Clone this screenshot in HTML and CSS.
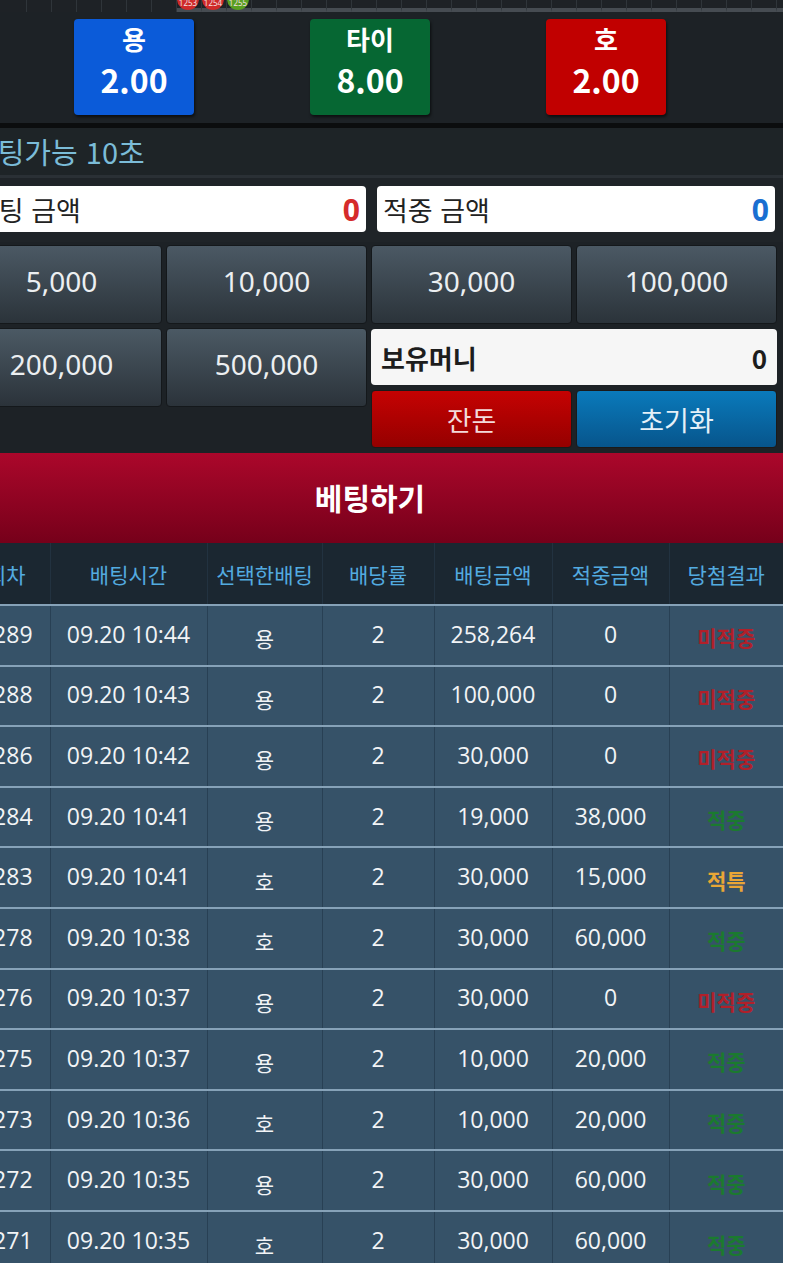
FILE: index.html
```html
<!DOCTYPE html>
<html lang="ko">
<head>
<meta charset="utf-8">
<link rel="stylesheet" href="styles.css">
</head>
<body>
<div class="viewport">
  <div class="page">
    <div class="scorestrip">
      <div class="cell"></div><div class="cell"></div><div class="cell"></div><div class="cell"></div><div class="cell"></div><div class="cell"></div><div class="cell"></div>
      <div class="cell bar"><span class="dot red">1253</span></div>
      <div class="cell bar"><span class="dot red">1254</span></div>
      <div class="cell bar"><span class="dot green">1255</span></div>
      <div class="cell bar"></div><div class="cell bar"></div><div class="cell bar"></div><div class="cell bar"></div><div class="cell bar"></div><div class="cell bar"></div><div class="cell bar"></div><div class="cell bar"></div><div class="cell bar"></div><div class="cell bar"></div><div class="cell bar"></div><div class="cell bar"></div><div class="cell bar"></div><div class="cell bar"></div><div class="cell bar"></div><div class="cell bar"></div><div class="cell bar"></div><div class="cell bar"></div><div class="cell bar"></div><div class="cell bar"></div><div class="cell bar"></div><div class="cell bar"></div><div class="cell bar"></div>
    </div>

    <div class="odds">
      <div class="odd blue"><span class="odd-name">용</span><span class="odd-val">2.00</span></div>
      <div class="odd green"><span class="odd-name">타이</span><span class="odd-val">8.00</span></div>
      <div class="odd red"><span class="odd-name">호</span><span class="odd-val">2.00</span></div>
    </div>

    <div class="timer">베팅가능 10초</div>

    <div class="amounts">
      <div class="amount-box"><span class="amount-label">베팅 금액</span><span class="amount-val red-text">0</span></div>
      <div class="amount-box"><span class="amount-label">적중 금액</span><span class="amount-val blue-text">0</span></div>
    </div>

    <div class="chips">
      <button class="chip">5,000</button>
      <button class="chip">10,000</button>
      <button class="chip">30,000</button>
      <button class="chip">100,000</button>
      <button class="chip">200,000</button>
      <button class="chip">500,000</button>
      <div class="side">
        <div class="money"><span>보유머니</span><span>0</span></div>
        <div class="side-btns">
          <button class="act change">잔돈</button>
          <button class="act reset">초기화</button>
        </div>
      </div>
    </div>

    <div class="betbar">베팅하기</div>

    <table class="history">
      <colgroup>
        <col class="w1"><col class="w2"><col class="w3"><col class="w4"><col class="w5"><col class="w6"><col class="w7">
      </colgroup>
      <thead>
        <tr><th class="c1">회차</th><th>배팅시간</th><th>선택한배팅</th><th>배당률</th><th>배팅금액</th><th>적중금액</th><th>당첨결과</th></tr>
      </thead>
      <tbody>
        <tr><td class="c1">1289</td><td>09.20 10:44</td><td class="ko">용</td><td>2</td><td>258,264</td><td>0</td><td class="res lose">미적중</td></tr>
        <tr><td class="c1">1288</td><td>09.20 10:43</td><td class="ko">용</td><td>2</td><td>100,000</td><td>0</td><td class="res lose">미적중</td></tr>
        <tr><td class="c1">1286</td><td>09.20 10:42</td><td class="ko">용</td><td>2</td><td>30,000</td><td>0</td><td class="res lose">미적중</td></tr>
        <tr><td class="c1">1284</td><td>09.20 10:41</td><td class="ko">용</td><td>2</td><td>19,000</td><td>38,000</td><td class="res win">적중</td></tr>
        <tr><td class="c1">1283</td><td>09.20 10:41</td><td class="ko">호</td><td>2</td><td>30,000</td><td>15,000</td><td class="res tie">적특</td></tr>
        <tr><td class="c1">1278</td><td>09.20 10:38</td><td class="ko">호</td><td>2</td><td>30,000</td><td>60,000</td><td class="res win">적중</td></tr>
        <tr><td class="c1">1276</td><td>09.20 10:37</td><td class="ko">용</td><td>2</td><td>30,000</td><td>0</td><td class="res lose">미적중</td></tr>
        <tr><td class="c1">1275</td><td>09.20 10:37</td><td class="ko">용</td><td>2</td><td>10,000</td><td>20,000</td><td class="res win">적중</td></tr>
        <tr><td class="c1">1273</td><td>09.20 10:36</td><td class="ko">호</td><td>2</td><td>10,000</td><td>20,000</td><td class="res win">적중</td></tr>
        <tr><td class="c1">1272</td><td>09.20 10:35</td><td class="ko">용</td><td>2</td><td>30,000</td><td>60,000</td><td class="res win">적중</td></tr>
        <tr><td class="c1">1271</td><td>09.20 10:35</td><td class="ko">호</td><td>2</td><td>30,000</td><td>60,000</td><td class="res win">적중</td></tr>
      </tbody>
    </table>
  </div>
</div>
</body>
</html>
```

FILE: styles.css
```css
html, body {
  margin: 0;
  padding: 0;
  background: #ffffff;
}
body {
  font-family: "Noto Sans", "Noto Sans CJK KR", sans-serif;
}
.viewport {
  width: 783px;
  height: 1263px;
  overflow: hidden;
  background: #1d2226;
}
.page {
  width: 826px;
  margin-left: -43px;
  background: #1d2226;
}

/* score strip */
.scorestrip {
  display: flex;
  height: 12px;
  overflow: hidden;
  padding-left: 45px;
  background: #1e2226;
}
.cell {
  flex: 0 0 24px;
  height: 12px;
  border-right: 1px solid #2f353a;
  position: relative;
  box-sizing: content-box;
}
.cell.bar {
  height: 8px;
  border-bottom: 4px solid #464c52;
}
.dot {
  position: absolute;
  left: 0;
  top: -12px;
  width: 22px;
  height: 22px;
  border-radius: 50%;
  font-size: 8px;
  line-height: 30px;
  text-align: center;
  color: #f4e0e0;
}
.dot.red { background: #cf2a2a; }
.dot.green { background: #5a9f22; }

/* odds */
.odds {
  display: flex;
  justify-content: center;
  gap: 116px;
  padding: 7px 0 8px;
  height: 96px;
  border-bottom: 5px solid #0b0d0e;
}
.odd {
  width: 120px;
  height: 96px;
  border-radius: 4px;
  box-shadow: 1px 2px 3px rgba(0,0,0,0.6);
  display: flex;
  flex-direction: column;
  align-items: center;
  font-family: "Noto Sans CJK KR", sans-serif;
  font-weight: 700;
  color: #ffffff;
}
.odd.blue { background: #0b5bd9; }
.odd.green { background: #066733; }
.odd.red { background: #c10000; }
.odd-name {
  font-size: 26px;
  line-height: 28px;
  margin-top: 6px;
}
.odd-val {
  font-size: 32px;
  line-height: 32px;
  margin-top: 10px;
}

/* timer */
.timer {
  height: 50px;
  line-height: 46px;
  padding-left: 14px;
  font-family: "Noto Sans CJK KR", sans-serif;
  font-size: 29px;
  color: #7bbcd8;
  background: #1e2427;
  border-bottom: 3px solid #2a3035;
  box-sizing: border-box;
}

/* amount boxes */
.amounts {
  display: grid;
  grid-template-columns: 398px 398px;
  gap: 11px;
  padding: 8px 8px 0 11px;
  height: 64px;
  box-sizing: border-box;
  background: #1f2428;
}
.amount-box {
  height: 46px;
  background: #ffffff;
  border-radius: 4px;
  display: flex;
  justify-content: space-between;
  align-items: center;
  padding: 0 6px;
  font-family: "Noto Sans CJK KR", sans-serif;
}
.amount-label {
  font-size: 27px;
  color: #222;
}
.amount-val {
  font-family: "Noto Sans", sans-serif;
  font-weight: 700;
  font-size: 30px;
}
.red-text { color: #d52b2b; }
.blue-text { color: #1a6fd1; }

/* chips */
.chips {
  display: grid;
  grid-template-columns: repeat(4, 201px);
  grid-template-rows: 79px 120px;
  column-gap: 4px;
  row-gap: 4px;
  padding: 3px 0 0 4px;
  height: 211px;
  box-sizing: border-box;
  background: #1d2226;
}
.chip {
  border: 1px solid #14181b;
  border-radius: 4px;
  background: linear-gradient(#4b5964, #2b333a);
  color: #eceff1;
  font-family: "Noto Sans", sans-serif;
  font-size: 28px;
  padding: 0 0 7px;
  height: 79px;
  margin: 0;
}
.side {
  grid-column: 3 / span 2;
  display: flex;
  flex-direction: column;
  gap: 5px;
  margin-top: 1px;
}
.money {
  height: 56px;
  background: #f6f6f6;
  border-radius: 4px;
  display: flex;
  justify-content: space-between;
  align-items: center;
  padding: 0 10px;
  font-family: "Noto Sans CJK KR", sans-serif;
  font-weight: 700;
  font-size: 26px;
  color: #1d1d1d;
}
.side-btns {
  display: grid;
  grid-template-columns: 201px 201px;
  gap: 4px;
}
.act {
  height: 58px;
  border: 1px solid #1a1a1a;
  border-radius: 4px;
  font-family: "Noto Sans CJK KR", sans-serif;
  font-size: 27px;
  padding: 0;
  margin: 0;
}
.act.change {
  background: linear-gradient(#c50202, #950000);
  color: #f3dada;
}
.act.reset {
  background: linear-gradient(#0a7abb, #07558c);
  color: #e4f0f8;
}

/* bet bar */
.betbar {
  height: 90px;
  line-height: 88px;
  text-align: center;
  background: linear-gradient(#ab072b, #76001a);
  color: #ffffff;
  font-family: "Noto Sans CJK KR", sans-serif;
  font-weight: 700;
  font-size: 30px;
}

/* history table */
.history {
  width: 826px;
  border-collapse: collapse;
  table-layout: fixed;
}
.w1 { width: 93px; }
.w2 { width: 157px; }
.w3 { width: 115px; }
.w4 { width: 112px; }
.w5 { width: 118px; }
.w6 { width: 117px; }
.w7 { width: 114px; }
.history thead tr {
  height: 62px;
}
.history th {
  padding: 0;
  background: #1b2731;
  color: #53abe0;
  font-family: "Noto Sans CJK KR", sans-serif;
  font-weight: 400;
  font-size: 21px;
  border-left: 1px solid #223240;
  text-align: center;
}
.history tbody tr {
  height: 60.6px;
}
.history td {
  padding: 0 0 3px;
  line-height: 26px;
  background: #365268;
  border-top: 2px solid #86a2b8;
  border-left: 1px solid #284054;
  color: #f2f4f6;
  font-family: "Open Sans", "Noto Sans CJK KR", sans-serif;
  font-size: 23px;
  text-align: center;
}
.history .c1 {
  padding-left: 6px;
  border-left: none;
}
.history td.ko {
  font-family: "Noto Sans CJK KR", sans-serif;
  font-size: 21px;
  padding: 6px 0 0;
}
.history td.res {
  font-family: "Noto Sans CJK KR", sans-serif;
  font-weight: 700;
  font-size: 21px;
  padding: 4px 0 0;
}
.res.lose { color: #b0202a; }
.res.win { color: #1b7a2f; }
.res.tie { color: #e9a636; font-weight: 400; }
```
